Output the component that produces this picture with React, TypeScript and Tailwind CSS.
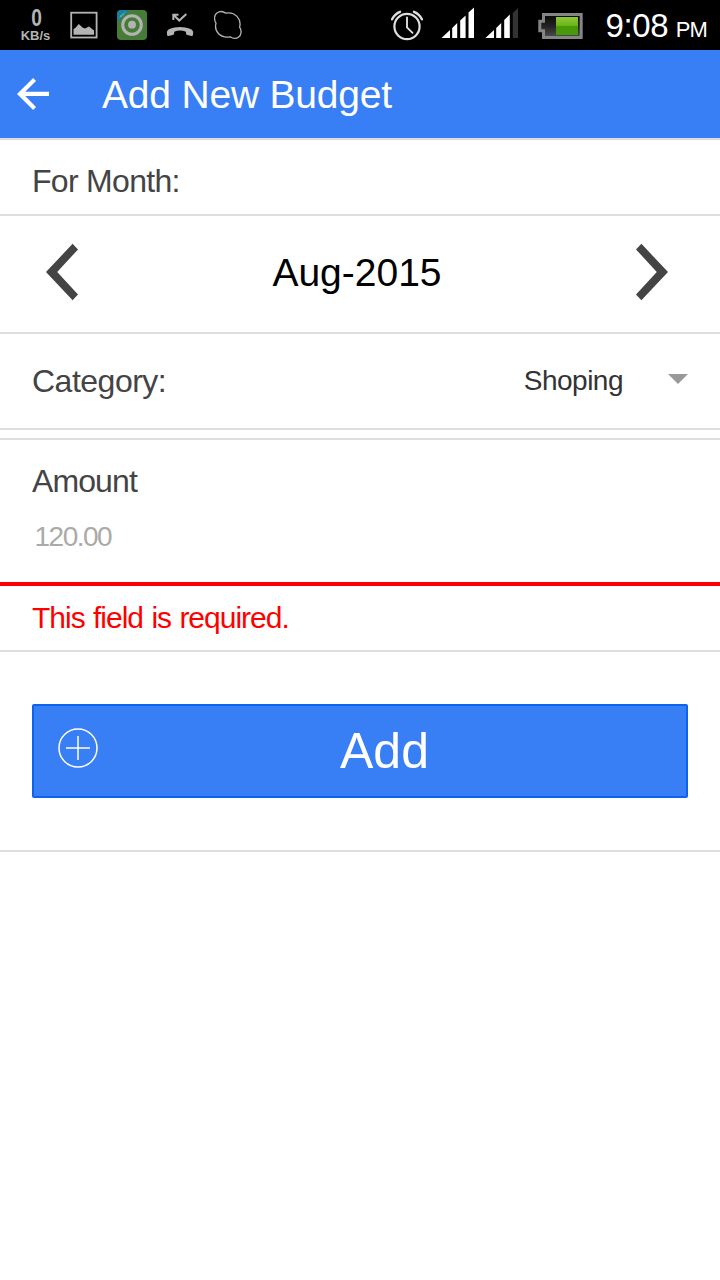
import React from "react";

function StatusBar() {
  return (
    <header className="flex h-[50px] shrink-0 items-start bg-black text-white">
      <div className="ml-[20px] mt-[7px] flex w-[31px] flex-col items-center font-bold text-[#b4b4b4]">
        <span className="ml-[2px] h-[22px] origin-center scale-x-[0.8] text-[24px] leading-[22px]">0</span>
        <span className="whitespace-nowrap text-[13px] leading-[13px]">KB/s</span>
      </div>
      <svg className="ml-[19px] mt-[11px]" width="28" height="28" viewBox="0 0 28 28">
        <rect x="1.2" y="1.7" width="25.4" height="24.8" fill="none" stroke="#b4b4b4" strokeWidth="1.8" />
        <path d="M3.5 23.8V18L5.5 16.8L8.8 13L12.5 16.6L15 17.5L19 15.5L24 19.5V23.8Z" fill="#b4b4b4" />
      </svg>
      <svg className="ml-[19px] mt-[10px]" width="30" height="30" viewBox="0 0 30 30">
        <rect width="30" height="30" rx="4" fill="#467c37" />
        <path d="M4 0H13L0 12V4Q0 0 4 0Z" fill="#16809a" />
        <path d="M2.5 7.5L8.5 2M4.5 7L3.5 5M6.5 5.5L5 3.5" stroke="#74b5c4" strokeWidth=".8" />
        <circle cx="15" cy="15" r="9.3" fill="none" stroke="#b4b4b4" strokeWidth="3" />
        <circle cx="15" cy="14.7" r="3.9" fill="#b4b4b4" />
      </svg>
      <svg className="ml-[18px] mt-[12px]" width="30" height="26" viewBox="0 0 30 26">
        <path d="M8.3 8V2.7H13.5M8.8 3.2L14.3 8.5L21.3 2" fill="none" stroke="#b4b4b4" strokeWidth="2" />
        <path d="M2 22.7L1.9 19.8Q3 15.2 14.8 14.9Q27 15.2 28.2 19.8L28 22.7Q27.8 24 26.5 23.9L22.3 23.1Q21 22.8 21 21.3V19.7Q15 17.5 9.2 19.7V21.3Q9 22.8 7.8 23.1L3.5 23.9Q2.2 24 2 22.7Z" fill="#b4b4b4" />
      </svg>
      <svg className="ml-[19px] mt-[10px]" width="30" height="30" viewBox="0 0 30 30">
        <path d="M2 13.2C-.2 9.5.1 5 2.9 3C5.8.9 9.5 1.5 11.8 3.1C21 1.3 27.8 9 25.6 17.2C28 20.5 27.3 25 24.7 27C22 29 18.3 28.3 16.2 26.8C6.5 28.6-.2 21.5 2 13.2Z" fill="none" stroke="#b4b4b4" strokeWidth="1.3" />
      </svg>
      <svg className="ml-[147px] mt-[10px]" width="34" height="32" viewBox="0 0 34 32" fill="none" stroke="#dedede">
        <circle cx="16" cy="16.5" r="12.6" strokeWidth="2.2" />
        <path d="M16 7.5V17.3L21.5 22.8" strokeWidth="1.9" strokeLinecap="round" />
        <path d="M1.1 9.3Q3.6 3.9 9 1.8M23 1.8Q28.4 3.9 30.9 9.3" strokeWidth="2.4" strokeLinecap="round" />
      </svg>
      <svg className="ml-[16px] mt-[7px]" width="77" height="32" viewBox="0 0 77 32" fill="white">
        <path d="M.5 31L9 23V31ZM11.2 21L16.2 16V31H11.2ZM19.2 13.5L24.6 8.5V31H19.2ZM27.5 5.5L33 .5V31H27.5Z" />
        <path d="M44.4 31L53 23V31ZM55.2 21L60.2 16V31H55.2ZM63.2 13L68.8 7.5V31H63.2Z" />
        <path d="M71.8 6L77 1V31H71.8Z" fill="#333" />
      </svg>
      <svg className="ml-[20px] mt-[12px]" width="46" height="28" viewBox="0 0 46 28">
        <defs>
          <linearGradient id="charge" x1="0" y1="0" x2="0" y2="1">
            <stop offset="0" stopColor="#8bc93b" />
            <stop offset=".49" stopColor="#6bb314" />
            <stop offset=".5" stopColor="#49980a" />
            <stop offset="1" stopColor="#47980a" />
          </linearGradient>
          <linearGradient id="empty" x1="0" y1="0" x2="0" y2="1">
            <stop offset="0" stopColor="#080808" />
            <stop offset=".5" stopColor="#222" />
            <stop offset="1" stopColor="#505050" />
          </linearGradient>
        </defs>
        <path d="M5.5 2.6H43.2V25.6H5.5V18.8H1.8V9.3H5.5Z" fill="url(#empty)" stroke="#858585" strokeWidth="3" />
        <rect x="18" y="5" width="22" height="18" fill="url(#charge)" />
      </svg>
      <div className="ml-[21.5px] mt-[1px] flex items-baseline whitespace-nowrap leading-[50px]">
        <span className="text-[33px] tracking-[-0.4px]">9:08</span>
        <span className="ml-[7.5px] text-[22px] tracking-[-0.7px]">PM</span>
      </div>
    </header>
  );
}

function AppBar() {
  return (
    <div className="flex h-[88px] shrink-0 items-center bg-[#387ef5] pl-[16px] text-white">
      <button aria-label="Back">
        <svg width="34" height="36" viewBox="0 0 34 36" fill="white">
          <path d="M1 18L17.2 2L20 4.9L9.2 15.8H33V20.1H9.2L20 31L17.2 34Z" />
        </svg>
      </button>
      <h1 className="ml-[52px] mt-[1px] text-[39px] leading-[48px] tracking-[-0.2px]">Add New Budget</h1>
    </div>
  );
}

function Chevron({ flipped = false }: { flipped?: boolean }) {
  return (
    <svg className={flipped ? "-scale-x-100" : ""} width="32" height="58" viewBox="0 0 32 58" fill="#444">
      <path d="M0 29L26.6 .8L32 6.4L11.2 29L32 51.6L26.6 57.2Z" />
    </svg>
  );
}

export default function App() {
  return (
    <div className="flex h-[1280px] w-[720px] flex-col overflow-hidden bg-white font-['Liberation_Sans',sans-serif] text-[#444]">
      <StatusBar />
      <AppBar />
      <main className="flex flex-col">
        <section className="h-[78px] border-y-2 border-[#ddd] px-[32px] pt-[8px] text-[32px] leading-[66px] tracking-[-0.7px]">
          For Month:
        </section>
        <section className="flex h-[118px] items-center justify-between border-b-2 border-[#ddd] pb-[4px] pl-[46px] pr-[52px]">
          <button aria-label="Previous month"><Chevron /></button>
          <span className="mt-[2px] text-[39px] leading-[48px] text-black">Aug-2015</span>
          <button aria-label="Next month"><Chevron flipped /></button>
        </section>
        <label className="flex h-[96px] items-center border-b-2 border-[#ddd] px-[32px]">
          <span className="text-[32px] leading-[40px] tracking-[-0.5px]">Category:</span>
          <span className="ml-auto text-[28px] leading-[40px] tracking-[-0.5px] text-[#333]">Shoping</span>
          <svg className="mb-[5px] ml-[45px]" width="20" height="10" viewBox="0 0 20 10">
            <path d="M0 0H20L10 10Z" fill="#999" />
          </svg>
        </label>
        <label className="mt-[8px] flex h-[148px] flex-col border-b-4 border-t-2 border-b-[#f00] border-t-[#ddd] px-[32px] pt-[21px]">
          <span className="text-[32px] leading-[40px] tracking-[-0.9px]">Amount</span>
          <span className="ml-[2.5px] mt-[15px] text-[28px] leading-[42px] tracking-[-1.5px] text-[#aaa]">120.00</span>
        </label>
        <p className="h-[66px] border-b-2 border-[#ddd] px-[32px] text-[30px] leading-[63px] tracking-[-1px] [word-spacing:1px] text-[#f00]">
          This field is required.
        </p>
        <section className="h-[200px] border-b-2 border-[#ddd] px-[32px] pt-[52px]">
          <button className="flex h-[94px] w-full items-center rounded-[2px] border-2 border-[#0c63ee] bg-[#387ef5] pl-[24px] text-white">
            <svg className="mb-[6px]" width="40" height="40" viewBox="0 0 40 40" fill="none" stroke="white" strokeWidth="1.5">
              <circle cx="20" cy="20" r="19" />
              <path d="M20 8V32M8 20H32" />
            </svg>
            <span className="ml-[242px] text-[50px] leading-[60px] tracking-[0px]">Add</span>
          </button>
        </section>
      </main>
    </div>
  );
}
